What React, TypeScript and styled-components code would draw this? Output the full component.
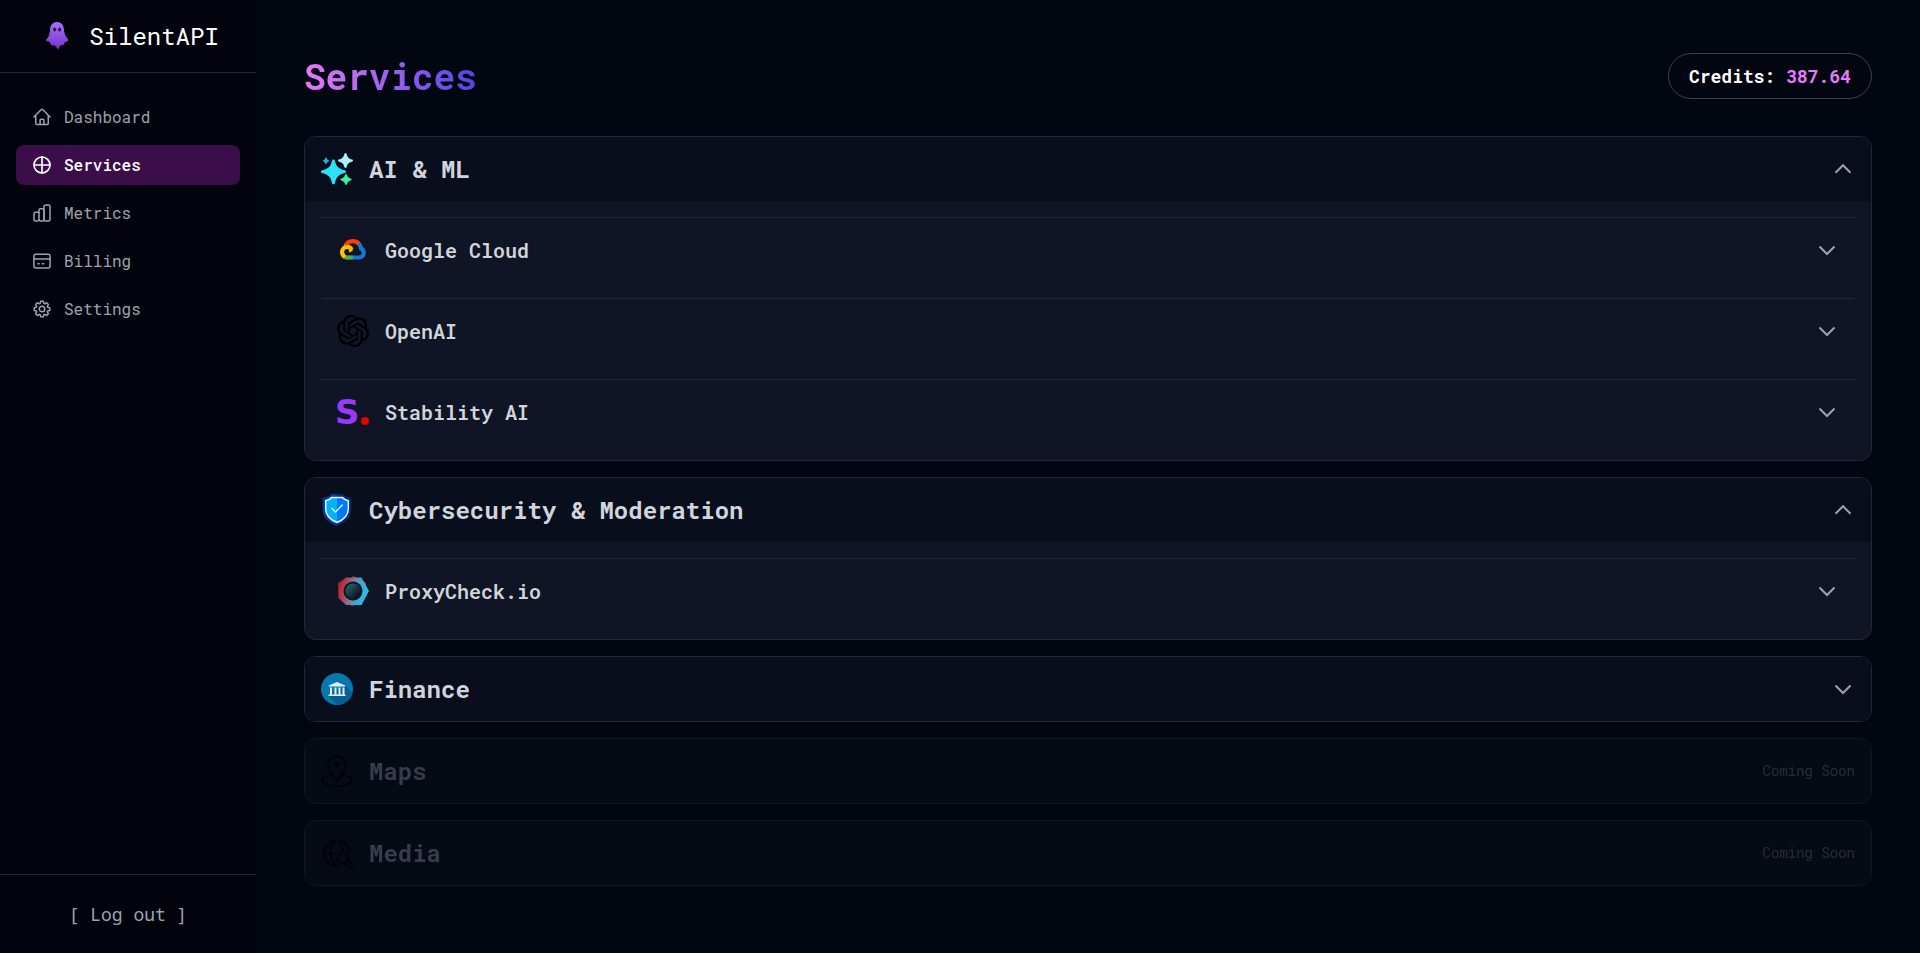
import React, { useState } from "react";
import styled, { createGlobalStyle, css } from "styled-components";
import { SiOpenai } from "react-icons/si";

const GlobalStyle = createGlobalStyle`
  *, *::before, *::after { box-sizing: border-box; }
  body {
    margin: 0;
    background: #020610;
    color: #d1d5db;
    font-family: "Roboto Mono", "DejaVu Sans Mono", monospace;
    font-size: 16px;
    line-height: 24px;
  }
  h1, h2, h3, ul { margin: 0; padding: 0; }
  ul { list-style: none; }
  button { font: inherit; color: inherit; background: none; border: 0; padding: 0; cursor: pointer; }
  svg { display: block; flex: none; }
`;

const Shell = styled.div`
  display: flex;
  min-height: 100vh;
`;

const Sidebar = styled.aside`
  display: flex;
  flex-direction: column;
  flex: 0 0 256px;
  background: #02030c;
`;

const Brand = styled.a`
  display: flex;
  align-items: center;
  justify-content: center;
  gap: 12px;
  padding: 16px;
  border-bottom: 1px solid #1f2937;
  color: #ffffff;
  font-size: 24px;
  line-height: 40px;
  text-decoration: none;
`;

const Nav = styled.nav`
  flex: 1;
  padding: 24px 16px;
`;

const NavList = styled.ul`
  display: flex;
  flex-direction: column;
  gap: 8px;
`;

const NavLink = styled.a<{ $active?: boolean }>`
  display: flex;
  align-items: center;
  gap: 12px;
  padding: 8px 16px;
  border-radius: 8px;
  color: ${(p) => (p.$active ? "#ffffff" : "#9ca3af")};
  background: ${(p) => (p.$active ? "#3b0d49" : "transparent")};
  font-weight: ${(p) => (p.$active ? 500 : 400)};
  text-decoration: none;
`;

const SidebarFooter = styled.div`
  display: flex;
  justify-content: center;
  padding: 24px 16px;
  border-top: 1px solid #1f2937;
`;

const LogoutButton = styled.button`
  color: #9ca3af;
  font-family: "Noto Sans Mono", "DejaVu Sans Mono", monospace;
  font-size: 18px;
  line-height: 30px;
`;

const Main = styled.main`
  flex: 1;
  min-width: 0;
  padding: 48px;
`;

const PageHeader = styled.header`
  display: flex;
  align-items: center;
  justify-content: space-between;
  min-height: 56px;
  margin-bottom: 32px;
`;

const Title = styled.h1`
  font-size: 36px;
  line-height: 56px;
  font-weight: 700;
  color: transparent;
  background: linear-gradient(to right, #e879f9, #4f46e5);
  background-clip: text;
  -webkit-background-clip: text;
`;

const Credits = styled.div`
  padding: 8px 20px;
  border: 1px solid #374151;
  border-radius: 24px;
  color: #ffffff;
  font-size: 18px;
  line-height: 28px;
  font-weight: 700;
`;

const CreditAmount = styled.span`
  color: #e879f9;
`;

const CategoryList = styled.div`
  display: flex;
  flex-direction: column;
  gap: 16px;
`;

const Card = styled.section<{ $disabled?: boolean }>`
  overflow: hidden;
  border: 1px solid #1f2937;
  border-radius: 12px;
  background: #0f1524;
  opacity: ${(p) => (p.$disabled ? 0.5 : 1)};
`;

const headerRow = css`
  display: flex;
  align-items: center;
  gap: 16px;
  width: 100%;
  padding: 16px;
  text-align: left;
`;

const CardHeader = styled.button`
  ${headerRow}
  background: #080e1b;
  color: #d1d5db;
  &:disabled {
    color: #6b7280;
    cursor: not-allowed;
  }
`;

const CardTitle = styled.h2`
  flex: 1;
  font-size: 24px;
  line-height: 32px;
  font-weight: 700;
`;

const ComingSoon = styled.span`
  color: #4b5563;
  font-size: 14px;
  line-height: 20px;
`;

const ServiceList = styled.ul`
  padding: 16px 16px 0;
`;

const ServiceItem = styled.li`
  padding-bottom: 16px;
  border-top: 1px solid #1f2937;
`;

const ServiceButton = styled.button`
  ${headerRow}
`;

const ServiceName = styled.h3`
  flex: 1;
  font-size: 20px;
  line-height: 32px;
  font-weight: 600;
`;

const NavSvg = ({ children }: { children: React.ReactNode }) => (
  <svg width="20" height="20" viewBox="0 0 24 24" fill="none" stroke="currentColor" strokeWidth="1.8" strokeLinecap="round" strokeLinejoin="round" aria-hidden="true">
    {children}
  </svg>
);

const HomeIcon = () => (
  <NavSvg>
    <path d="M2.3 12 11.2 3.1a1.1 1.1 0 0 1 1.6 0L21.7 12M4.5 9.8v10.1c0 .6.5 1.1 1.1 1.1h12.8c.6 0 1.1-.5 1.1-1.1V9.8M9.7 21v-5.2c0-.6.5-1.1 1.1-1.1h2.4c.6 0 1.1.5 1.1 1.1V21" />
  </NavSvg>
);

const ServicesIcon = () => (
  <NavSvg>
    <circle cx="12" cy="12" r="9.6" strokeWidth="2" />
    <path d="M12 2.4v19.2M2.4 12h19.2" strokeWidth="2" />
  </NavSvg>
);

const MetricsIcon = () => (
  <NavSvg>
    <rect x="2.4" y="11" width="6" height="10.5" rx="1.6" />
    <path d="M8.4 12V8.4c0-.9.7-1.6 1.6-1.6h2.8c1 0 1.6.7 1.6 1.6v11.5M8.4 19.9c0 .9.7 1.6 1.6 1.6h2.8c.9 0 1.6-.7 1.6-1.6" />
    <rect x="14.4" y="2.4" width="7.2" height="19.1" rx="1.8" />
  </NavSvg>
);

const BillingIcon = () => (
  <NavSvg>
    <rect x="2.3" y="4" width="19.4" height="16.4" rx="2.4" />
    <path d="M2.3 9.6h19.4M7 15.4h1.600M12.400 15.400H14" />
  </NavSvg>
);

const SettingsIcon = () => (
  <NavSvg>
    <path d="M10.400 2.800h3.200l.6 2.500 1.100.5 2.200-1.400 2.200 2.200-1.400 2.200.5 1.100 2.500.6v3.200l-2.500.6-.5 1.100 1.400 2.200-2.200 2.200-2.200-1.400-1.100.5-.6 2.500h-3.200l-.6-2.500-1.100-.5-2.200 1.400-2.200-2.200 1.400-2.200-.5-1.100-2.500-.6v-3.200l2.500-.6.5-1.100-1.400-2.200 2.200-2.200 2.200 1.400 1.100-.5Z" />
    <circle cx="12" cy="12" r="3.300" />
  </NavSvg>
);

const Chevron = ({ open }: { open?: boolean }) => (
  <svg width="24" height="24" viewBox="0 0 24 24" fill="none" stroke="#9ca3af" strokeWidth="2" aria-hidden="true">
    <path d={open ? "m4.500 15.750 7.500-7.500 7.500 7.500" : "m4.500 8.500 7.500 7.500 7.500-7.500"} />
  </svg>
);

const GhostLogo = () => (
  <svg width="40" height="40" viewBox="0 0 40 40" aria-hidden="true">
    <defs>
      <linearGradient id="ghost" x1="0" y1="0" x2="0" y2="1">
        <stop offset="0" stopColor="#a970f8" />
        <stop offset="1" stopColor="#7434ce" />
      </linearGradient>
    </defs>
    <path fill="url(#ghost)" d="M20 6c4.200 0 6.600 3 6.900 7 .3 4.500 1.300 7 3.600 9.500.7.8.8 1.500.4 2.200-.5.8-1.600.7-2.400 1.100-.9.5-1 2.300-2 3-1 .6-2.400.2-3.500 1-.9.7-.8 2.600-1.700 3.700-1.300-1-1.700-2.600-2.900-3.400-1.200-.9-3-.1-4.100-1-.9-.8-.8-2.500-1.700-3.200-.8-.5-2.700-.2-3.300-1.100-.4-.7 0-1.300.7-2.100 2.200-2.600 2.800-5.200 3.100-9.700C13.400 9 15.800 6 20 6Z" />
    <ellipse cx="17.600" cy="13.400" rx="1.500" ry="2" fill="#25104e" />
    <ellipse cx="22.600" cy="13.400" rx="1.500" ry="2" fill="#25104e" />
  </svg>
);

const SparklesIcon = () => (
  <svg width="32" height="32" viewBox="0 0 32 32" aria-hidden="true">
    <path fill="#2be0f7" d="M12.500 6.500c.8 0 1.200.5 1.500 1.400 1.500 5.500 3 7.400 9.600 9.400 1.900.6 1.900 2.200 0 2.800-6.600 2-8.100 4-9.600 9.800-.5 1.800-2.500 1.800-3 0-1.500-5.800-3-7.800-9.600-9.800-1.900-.6-1.900-2.200 0-2.800 6.600-2 8.100-3.900 9.600-9.400.3-.9.700-1.400 1.500-1.400Z" />
    <path fill="#a8f1ff" d="M24.500 0c.6 0 .9.400 1.100 1 .9 3.200 1.800 4.400 5.700 5.600 1 .3 1 1.500 0 1.800-3.900 1.200-4.800 2.400-5.700 5.700-.3 1.200-1.900 1.200-2.200 0-.9-3.300-1.800-4.500-5.700-5.700-1-.3-1-1.500 0-1.800 3.900-1.200 4.800-2.400 5.700-5.600.2-.6.500-1 1.100-1Z" />
    <path fill="#30f5a5" d="M25 21c.6 0 .8.400 1 1 .6 2 1.400 2.800 4 3.700 1 .3 1 1.300 0 1.600-2.600.9-3.400 1.700-4 3.800-.3 1.200-1.700 1.200-2 0-.6-2.100-1.400-2.900-4-3.800-1-.3-1-1.300 0-1.600 2.600-.9 3.400-1.700 4-3.700.2-.6.400-1 1-1Z" />
    <path fill="#25a9ee" d="M5 4.500c.6 0 .8.400.9 1 .2.900.5 1.200 1.400 1.500.9.200.9 1.500 0 1.700-.9.300-1.200.7-1.400 1.600-.2.900-1.600.9-1.800 0-.2-.9-.5-1.300-1.400-1.600-.9-.2-.9-1.500 0-1.700.9-.3 1.200-.6 1.400-1.500.1-.6.300-1 .9-1Z" />
  </svg>
);

const GoogleCloudIcon = () => (
  <svg width="32" height="32" viewBox="0 0 32 32" fill="none" strokeWidth="4.200" aria-hidden="true">
    <path stroke="#4caf50" d="M8 23.500h8" />
    <path stroke="#1976d2" d="M15.700 23.500H22c2.700 0 4.700-2.200 4.700-4.800 0-2-1-3.400-2.600-4.200-.3-2-1.200-3.600-2.500-5" />
    <path stroke="#ff3d00" d="M8.300 12.200C9.500 9.200 12.400 7.100 15.700 7.100c2.400 0 4.500.9 6.100 2.600" />
    <path stroke="#ffc107" d="M8.200 23.100c-1.900-1-3.100-2.900-3.100-5.100 0-3.100 2.400-5.200 5.400-5.200 1.900 0 3.200.9 4.200 2.900" />
    <path stroke="#ffc107" strokeWidth="2" d="M12 17.700 15.400 15.600" />
  </svg>
);

const StabilityIcon = () => (
  <svg width="32" height="32" viewBox="0 0 32 32" overflow="visible" aria-hidden="true">
    <text x="-2" y="28" fill="#9b39fb" fontFamily="DejaVu Sans, sans-serif" fontSize="34" fontWeight="700">S</text>
    <circle cx="28" cy="25" r="4" fill="#e80000" />
  </svg>
);

const ShieldIcon = () => (
  <svg width="32" height="32" viewBox="0 0 32 32" aria-hidden="true">
    <path fill="#0a2c64" d="M16 0h5.500c1 1.700 4 3.300 8.200 3.700.5 0 .7.300.7.900V15c0 7.500-5 13.500-14.400 17Z" />
    <path fill="#063a9c" d="M16 0h-5.500c-1 1.700-4 3.300-8.200 3.700-.5 0-.7.300-.7.900V15c0 7.500 5 13.500 14.400 17Z" />
    <path fill="#0077ff" d="M16 3.500h5.500c1.200 1.800 3.300 2.800 5.800 3.200V15c0 6-3.800 10.500-11.300 13.500Z" />
    <path fill="#00b2ff" d="M16 3.500h-5.500C9.300 5.300 7.200 6.300 4.700 6.700V15c0 6 3.800 10.500 11.300 13.500Z" />
    <path fill="none" stroke="#e8f3ff" strokeWidth="1.500" d="M10.500 3.500h11c1.200 1.800 3.300 2.800 5.800 3.200V15c0 6-3.800 10.500-11.300 13.500C8.500 25.500 4.700 21 4.700 15V6.700c2.500-.4 4.600-1.400 5.800-3.200Z" />
    <path fill="none" stroke="#e0f2ff" strokeWidth="1.400" strokeLinecap="round" strokeLinejoin="round" d="m11 14.500 3.500 3.500 6.800-7" />
  </svg>
);

const ProxyCheckIcon = () => (
  <svg width="32" height="32" viewBox="0 0 32 32" aria-hidden="true">
    <defs>
      <linearGradient id="ring" x1="0" y1="0.300" x2="1" y2="0.500">
        <stop offset="0" stopColor="#c01c2c" />
        <stop offset="0.450" stopColor="#7c7f96" />
        <stop offset="0.700" stopColor="#35aedb" />
        <stop offset="1" stopColor="#2fb9ee" />
      </linearGradient>
      <linearGradient id="lens" x1="0" y1="0" x2="0.800" y2="0.900">
        <stop offset="0" stopColor="#28707f" />
        <stop offset="1" stopColor="#0c111d" />
      </linearGradient>
    </defs>
    <path fill="#b5202e" d="M15.500.5 29 7.500v4L15 5Z" />
    <path fill="#4a4458" d="M15.500 31.500 9 28h13Z" />
    <path fill="#c01c2c" d="M1.200 8 10 3v24L1.200 23Z" />
    <path fill="url(#ring)" d="M9 2.500h15.500L32 16l-7.500 14H9L2 23.500V8Z" />
    <circle cx="16" cy="16" r="9.500" fill="#101522" />
    <circle cx="16" cy="16" r="7.500" fill="url(#lens)" />
  </svg>
);

const FinanceIcon = () => (
  <svg width="32" height="32" viewBox="0 0 32 32" aria-hidden="true">
    <defs>
      <clipPath id="coin"><circle cx="16" cy="16" r="16" /></clipPath>
    </defs>
    <g clipPath="url(#coin)">
      <path fill="#0778ab" d="M0 0h32v32H0Z" />
      <path fill="#075e93" d="M24 12.500 36 24.500V36H20.500L7.500 23Z" />
    </g>
    <path fill="#dff2fb" d="m16 9 8.200 3.600v1H7.800v-1ZM9 14.500h2v7H9Zm4.500 0h2v7h-2Zm4 0h2v7h-2Zm4 0h2v7h-2ZM7.500 21.500h17V23h-17Z" />
  </svg>
);

const MapsIcon = () => (
  <svg width="32" height="32" viewBox="0 0 32 32" fill="none" stroke="#000000" strokeWidth="2" strokeLinejoin="round" strokeLinecap="round" aria-hidden="true">
    <path d="M16 26c-2-4-8.500-9.500-8.500-16a8.500 8.800 0 0 1 17 0c0 6.500-6.500 12-8.500 16Z" />
    <circle cx="16" cy="9.500" r="2.600" fill="#000000" stroke="none" />
    <path d="M10.500 20.600C5 21.200 1 23.200 1 25.600 1 28.600 7.700 31 16 31s15-2.400 15-5.400c0-2.400-4-4.400-9.500-5" />
  </svg>
);

const MediaIcon = () => (
  <svg width="32" height="32" viewBox="0 0 32 32" fill="none" stroke="#000000" strokeWidth="1.800" strokeLinecap="round" aria-hidden="true">
    <path d="M29 15.500A13 13 0 1 0 18.500 29M3.200 16.500H14M15.500 3c-7.500 7-7.500 19 0 26M16.500 3c3 2.800 4.900 6.600 5.400 10.500" />
    <circle cx="21.500" cy="21.500" r="5.200" />
    <path d="m25.500 25 1.500-1.300 4 4a2 2 0 0 1-3 3l-4-4Z" />
  </svg>
);

const navItems = [
  { label: "Dashboard", icon: <HomeIcon /> },
  { label: "Services", icon: <ServicesIcon />, active: true },
  { label: "Metrics", icon: <MetricsIcon /> },
  { label: "Billing", icon: <BillingIcon /> },
  { label: "Settings", icon: <SettingsIcon /> },
];

type Category = {
  title: string;
  icon: React.ReactNode;
  comingSoon?: boolean;
  services: { name: string; icon: React.ReactNode }[];
};

const categories: Category[] = [
  {
    title: "AI & ML",
    icon: <SparklesIcon />,
    services: [
      { name: "Google Cloud", icon: <GoogleCloudIcon /> },
      { name: "OpenAI", icon: <SiOpenai size={32} color="#000000" aria-hidden="true" /> },
      { name: "Stability AI", icon: <StabilityIcon /> },
    ],
  },
  {
    title: "Cybersecurity & Moderation",
    icon: <ShieldIcon />,
    services: [{ name: "ProxyCheck.io", icon: <ProxyCheckIcon /> }],
  },
  { title: "Finance", icon: <FinanceIcon />, services: [] },
  { title: "Maps", icon: <MapsIcon />, comingSoon: true, services: [] },
  { title: "Media", icon: <MediaIcon />, comingSoon: true, services: [] },
];

function CategoryCard({ category, open, onToggle }: { category: Category; open: boolean; onToggle: () => void }) {
  const { title, icon, comingSoon, services } = category;
  return (
    <Card $disabled={comingSoon}>
      <CardHeader type="button" disabled={comingSoon} aria-expanded={open} onClick={onToggle}>
        {icon}
        <CardTitle>{title}</CardTitle>
        {comingSoon ? <ComingSoon>Coming Soon</ComingSoon> : <Chevron open={open} />}
      </CardHeader>
      {open && services.length > 0 && (
        <ServiceList>
          {services.map((service) => (
            <ServiceItem key={service.name}>
              <ServiceButton type="button" aria-expanded={false}>
                {service.icon}
                <ServiceName>{service.name}</ServiceName>
                <Chevron />
              </ServiceButton>
            </ServiceItem>
          ))}
        </ServiceList>
      )}
    </Card>
  );
}

export default function App() {
  const [open, setOpen] = useState<string[]>(["AI & ML", "Cybersecurity & Moderation"]);
  const toggle = (title: string) =>
    setOpen((current) => (current.includes(title) ? current.filter((t) => t !== title) : [...current, title]));

  return (
    <>
      <GlobalStyle />
      <Shell>
        <Sidebar>
          <Brand href="#">
            <GhostLogo />
            <span>SilentAPI</span>
          </Brand>
          <Nav>
            <NavList>
              {navItems.map((item) => (
                <li key={item.label}>
                  <NavLink href="#" $active={item.active} aria-current={item.active ? "page" : undefined}>
                    {item.icon}
                    <span>{item.label}</span>
                  </NavLink>
                </li>
              ))}
            </NavList>
          </Nav>
          <SidebarFooter>
            <LogoutButton type="button">[ Log out ]</LogoutButton>
          </SidebarFooter>
        </Sidebar>
        <Main>
          <PageHeader>
            <Title>Services</Title>
            <Credits>
              Credits: <CreditAmount>387.64</CreditAmount>
            </Credits>
          </PageHeader>
          <CategoryList>
            {categories.map((category) => (
              <CategoryCard
                key={category.title}
                category={category}
                open={open.includes(category.title)}
                onToggle={() => toggle(category.title)}
              />
            ))}
          </CategoryList>
        </Main>
      </Shell>
    </>
  );
}
